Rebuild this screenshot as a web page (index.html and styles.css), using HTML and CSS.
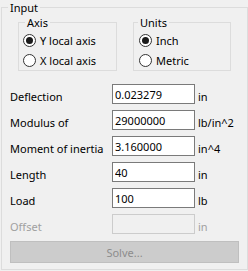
FILE: index.html
```html
<!DOCTYPE html>
<html lang="en">
  <head>
    <meta charset="UTF-8" />
    <meta name="viewport" content="width=device-width, initial-scale=1.0" />
    <title>Beam Input</title>
    <link rel="stylesheet" href="styles.css">
  </head>
  <body>
    <fieldset class="group input-group">
      <legend>Input</legend>

      <div class="options">
        <fieldset class="group sub axis">
          <legend>Axis</legend>
          <label class="radio"><input type="radio" name="axis" checked />Y local axis</label>
          <label class="radio"><input type="radio" name="axis" />X local axis</label>
        </fieldset>
        <fieldset class="group sub units">
          <legend>Units</legend>
          <label class="radio"><input type="radio" name="units" checked />Inch</label>
          <label class="radio"><input type="radio" name="units" />Metric</label>
        </fieldset>
      </div>

      <div class="fields">
        <div class="row">
          <span class="name">Deflection</span>
          <input class="value" type="text" value="0.023279" />
          <span class="unit">in</span>
        </div>
        <div class="row">
          <span class="name">Modulus of</span>
          <input class="value" type="text" value="29000000" />
          <span class="unit">lb/in^2</span>
        </div>
        <div class="row">
          <span class="name">Moment of inertia</span>
          <input class="value" type="text" value="3.160000" />
          <span class="unit">in^4</span>
        </div>
        <div class="row">
          <span class="name">Length</span>
          <input class="value" type="text" value="40" />
          <span class="unit">in</span>
        </div>
        <div class="row">
          <span class="name">Load</span>
          <input class="value" type="text" value="100" />
          <span class="unit">lb</span>
        </div>
        <div class="row disabled">
          <span class="name">Offset</span>
          <input class="value" type="text" value="" disabled />
          <span class="unit">in</span>
        </div>
      </div>

      <button class="btn-solve" disabled>Solve...</button>
    </fieldset>
  </body>
</html>
```

FILE: styles.css
```css
body {
  margin: 0;
  padding: 0 1px;
  background-color: #f0f0f0;
  font-family: "Noto Sans", sans-serif;
  font-size: 11px;
  line-height: 15px;
  color: #000;
}
.group {
  margin: 0;
  border: 1px solid #dcdcdc;
  box-sizing: border-box;
}
.group legend {
  padding: 0 2px;
  line-height: 15px;
}
.input-group {
  width: 246px;
  padding: 0 8px 6px 8px;
}
.input-group > legend {
  margin-left: -2px;
}
.options {
  display: flex;
  gap: 16px;
  margin-left: 8px;
}
.sub {
  padding: 0 0 0 4px;
}
.sub legend {
  margin-left: 2px;
}
.axis {
  width: 99px;
}
.units {
  width: 98px;
  padding-left: 5px;
}
.units legend {
  margin-left: -1px;
}
.radio {
  display: flex;
  align-items: center;
  height: 20px;
}
.radio input {
  appearance: none;
  width: 13px;
  height: 13px;
  margin: 0 4px 0 0;
  border: 1px solid #333;
  border-radius: 50%;
  background-color: #fff;
  box-sizing: border-box;
  display: grid;
  place-content: center;
}
.radio input:checked::before {
  content: "";
  width: 7px;
  height: 7px;
  border-radius: 50%;
  background-color: #1a1a1a;
}
.fields {
  margin-top: 10px;
}
.row {
  display: flex;
  align-items: center;
  height: 26px;
}
.name {
  width: 102px;
  padding-top: 4px;
}
.value {
  width: 83px;
  height: 20px;
  box-sizing: border-box;
  margin: 0;
  padding: 0 2px;
  border: 1px solid #7a7a7a;
  background-color: #fff;
  font-family: inherit;
  font-size: 11px;
  color: #000;
  outline: none;
}
.unit {
  margin-left: 3px;
  padding-top: 4px;
}
.disabled .name,
.disabled .unit {
  color: #a0a0a0;
}
.disabled .value {
  border-color: #cccccc;
  background-color: #f0f0f0;
}
.btn-solve {
  display: block;
  width: 229px;
  height: 22px;
  margin: 4px 0 0 0;
  padding: 0;
  border: 1px solid #bfbfbf;
  background-color: #cccccc;
  color: #8c8c8c;
  font-family: inherit;
  font-size: 11px;
}
```
